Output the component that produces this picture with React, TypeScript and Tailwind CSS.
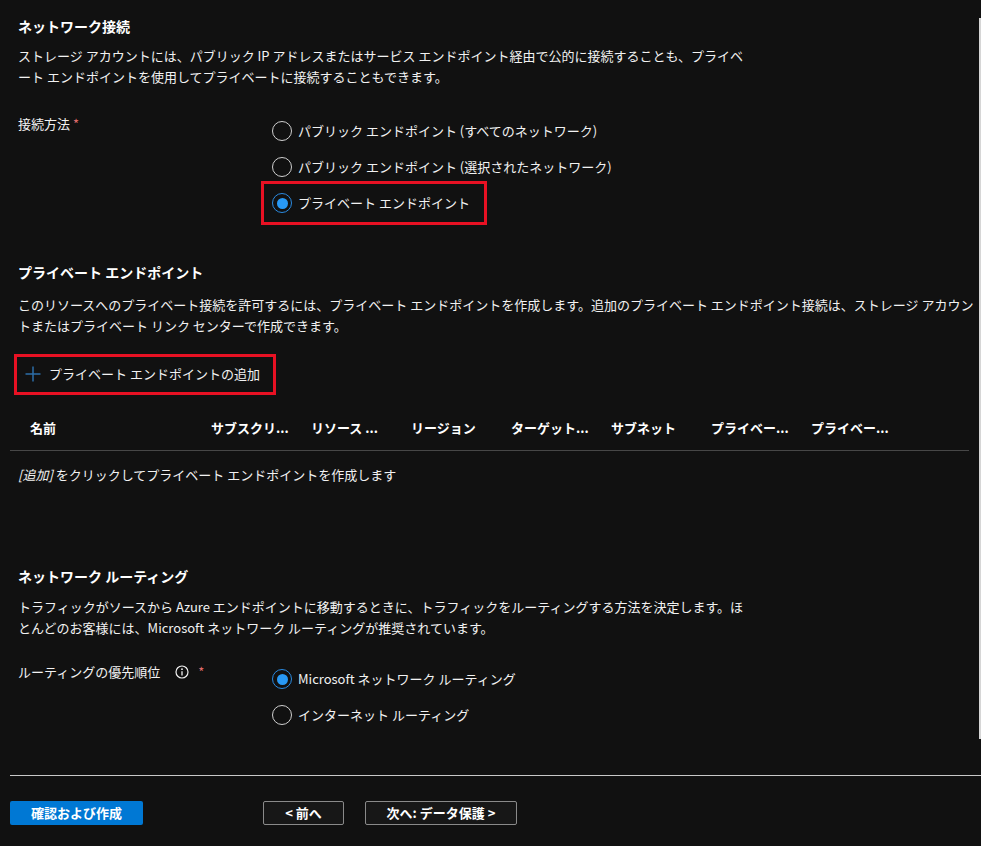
import React from 'react';

const font = "font-['Noto_Sans_CJK_JP','Noto_Sans',sans-serif]";

interface RadioProps {
  label: string;
  checked?: boolean;
}

function Radio({ label, checked = false }: RadioProps) {
  return (
    <div className="flex h-[36px] items-center">
      <span
        className={`flex h-[20px] w-[20px] shrink-0 items-center justify-center rounded-full border ${
          checked ? 'border-[#2a8ae0]' : 'border-[#cfcfcf]'
        }`}
      >
        {checked && <span className="h-[11px] w-[11px] rounded-full bg-[#2899f5]" />}
      </span>
      <span className="ml-[6px] whitespace-nowrap text-[13px] leading-[20px] text-[#f2f2f2]">{label}</span>
    </div>
  );
}

function Highlight() {
  return <div className="pointer-events-none absolute inset-0 border-[3px] border-[#e81123]" />;
}

// header labels as they show in the narrow columns
const columns = [
  { label: '名前', w: 'w-[191px] pl-[20px]' },
  { label: 'サブスクリ...', w: 'w-[100px] pl-[10px]' },
  { label: 'リソース ...', w: 'w-[100px] pl-[10px]' },
  { label: 'リージョン', w: 'w-[100px] pl-[10px]' },
  { label: 'ターゲット...', w: 'w-[100px] pl-[10px]' },
  { label: 'サブネット', w: 'w-[100px] pl-[10px]' },
  { label: 'プライベー...', w: 'w-[100px] pl-[10px]' },
  { label: 'プライベー...', w: 'w-[100px] pl-[10px]' },
];

export default function App() {
  return (
    <div className={`flex h-[846px] w-[981px] flex-col overflow-hidden bg-[#111111] text-[#f2f2f2] ${font}`}>
      <div className="flex h-[775px]">
        <div className="w-[979px] overflow-hidden">
          {/* ネットワーク接続 */}
          <div className="pl-[18px] pt-[16px]">
            <h2 className="text-[14px] font-bold leading-[20px] text-white">ネットワーク接続</h2>
            <p className="mt-[9px] whitespace-nowrap text-[13px] leading-[21px]">
              ストレージ アカウントには、パブリック IP アドレスまたはサービス エンドポイント経由で公的に接続することも、プライベ
              <br />
              ート エンドポイントを使用してプライベートに接続することもできます。
            </p>
            <div className="mt-[26px] flex">
              <div className="w-[254px] pt-[1px] text-[13px] leading-[20px]">
                接続方法 <span className="text-[#e06c6c]">*</span>
              </div>
              <div className="flex flex-col">
                <Radio label="パブリック エンドポイント (すべてのネットワーク)" />
                <Radio label="パブリック エンドポイント (選択されたネットワーク)" />
                <div className="relative">
                  <div className="absolute -left-[11px] -top-[4px] h-[44px] w-[226px]">
                    <Highlight />
                  </div>
                  <Radio label="プライベート エンドポイント" checked />
                </div>
              </div>
            </div>
          </div>

          {/* プライベート エンドポイント */}
          <div className="mt-[41px] pl-[18px]">
            <h2 className="text-[14px] font-bold leading-[20px] text-white">プライベート エンドポイント</h2>
            <p className="mt-[12px] whitespace-nowrap text-[13px] leading-[21px]">
              このリソースへのプライベート接続を許可するには、プライベート エンドポイントを作成します。追加のプライベート エンドポイント接続は、ストレージ アカウン
              <br />
              トまたはプライベート リンク センターで作成できます。
            </p>
            <div className="relative mt-[22px] flex h-[32px] w-[258px] items-center">
              <div className="absolute -left-[4px] -top-[4px] h-[41px] w-[262px]">
                <Highlight />
              </div>
              <svg width="16" height="16" viewBox="0 0 16 16" className="ml-[7px] shrink-0">
                <path d="M8 0.5v15M0.5 8h15" stroke="#2c6ea8" strokeWidth="1.5" fill="none" />
              </svg>
              <span className="ml-[8px] whitespace-nowrap text-[13px] leading-[20px]">
                プライベート エンドポイントの追加
              </span>
            </div>
          </div>

          <div className="mt-[16px] px-[10px]">
            <div className="flex h-[45px] w-[959px] items-center border-b border-[#474747]">
              {columns.map((c, i) => (
                <div key={i} className={`${c.w} shrink-0 whitespace-nowrap text-[13px] font-bold leading-[20px] text-white`}>
                  {c.label}
                </div>
              ))}
            </div>
          </div>
          <div className="mt-[14px] pl-[18px] text-[13px] leading-[20px]">
            <span className="italic">[追加]</span> をクリックしてプライベート エンドポイントを作成します
          </div>

          {/* ネットワーク ルーティング */}
          <div className="mt-[81px] pl-[18px]">
            <h2 className="text-[14px] font-bold leading-[20px] text-white">ネットワーク ルーティング</h2>
            <p className="mt-[10px] whitespace-nowrap text-[13px] leading-[21px]">
              トラフィックがソースから Azure エンドポイントに移動するときに、トラフィックをルーティングする方法を決定します。ほ
              <br />
              とんどのお客様には、Microsoft ネットワーク ルーティングが推奨されています。
            </p>
            <div className="mt-[23px] flex">
              <div className="flex w-[254px] items-start pt-[1px] text-[13px] leading-[20px]">
                <span>ルーティングの優先順位</span>
                <svg width="14" height="14" viewBox="0 0 14 14" className="ml-[15px] mt-[3px]">
                  <circle cx="7" cy="7" r="6" stroke="#f2f2f2" strokeWidth="1.2" fill="none" />
                  <circle cx="7" cy="4.2" r="0.9" fill="#f2f2f2" />
                  <path d="M7 6.2v4.3" stroke="#f2f2f2" strokeWidth="1.3" />
                </svg>
                <span className="ml-[9px] text-[#e06c6c]">*</span>
              </div>
              <div className="flex flex-col">
                <Radio label="Microsoft ネットワーク ルーティング" checked />
                <Radio label="インターネット ルーティング" />
              </div>
            </div>
          </div>
        </div>
        <div className="mt-[18px] h-[721px] w-[2px] bg-[#d6d6d6]" />
      </div>

      <div className="ml-[10px] h-px bg-[#c8c8c8]" />

      <div className="mt-[25px] flex items-center pl-[10px]">
        <button className="flex h-[24px] w-[133px] items-center justify-center rounded-[2px] bg-[#0078d4] text-[13px] font-bold text-white">
          確認および作成
        </button>
        <button className="ml-[120px] flex h-[24px] w-[81px] items-center justify-center rounded-[2px] border border-[#8a8a8a] bg-[#171717] text-[13px] font-bold text-white">
          &lt; 前へ
        </button>
        <button className="ml-[21px] flex h-[24px] w-[152px] items-center justify-center rounded-[2px] border border-[#8a8a8a] bg-[#171717] text-[13px] font-bold text-white">
          次へ: データ保護 &gt;
        </button>
      </div>
    </div>
  );
}
